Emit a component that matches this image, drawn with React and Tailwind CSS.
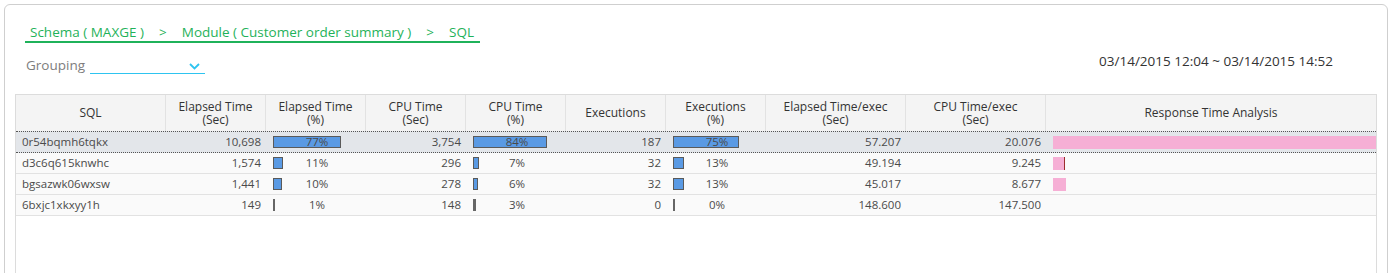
import React from "react";

const rows = [
  { sql: "0r54bqmh6tqkx", el: "10,698", elp: 77, cpu: "3,754", cpup: 84, ex: "187", exp: 75, ele: "57.207", cpue: "20.076", rt: 325, sel: true },
  { sql: "d3c6q615knwhc", el: "1,574", elp: 11, cpu: "296", cpup: 7, ex: "32", exp: 13, ele: "49.194", cpue: "9.245", rt: 12, edge: true },
  { sql: "bgsazwk06wxsw", el: "1,441", elp: 10, cpu: "278", cpup: 6, ex: "32", exp: 13, ele: "45.017", cpue: "8.677", rt: 13 },
  { sql: "6bxjc1xkxyy1h", el: "149", elp: 1, cpu: "148", cpup: 3, ex: "0", exp: 0, ele: "148.600", cpue: "147.500", rt: 0 },
];

function PctCell({ p }) {
  const w = Math.max(2, Math.round((88 * p) / 100));
  return (
    <div className="relative w-[100px] shrink-0 h-full flex items-center">
      <div
        className={p <= 3 ? "ml-[6px] h-[12px] bg-[#666]" : "ml-[6px] h-[12px] bg-[#5a9ae4] border border-[#5a5a5a]"}
        style={{ width: w }}
      />
      <div className="absolute inset-0 flex items-center justify-center">{p}%</div>
    </div>
  );
}

function Head({ w, children, last }) {
  return (
    <div
      className={
        "shrink-0 h-full flex items-center justify-center text-center leading-[13.5px] " +
        (last ? "flex-1" : "border-r border-[#e2e2e2] " + w)
      }
    >
      {children}
    </div>
  );
}

export default function App() {
  return (
    <div className="bg-white w-[1391px] h-[273px] overflow-hidden pt-[4px] pl-[4px]" style={{ fontFamily: '"Open Sans", "Noto Sans", sans-serif' }}>
      <div className="w-[1384px] h-[320px] border border-[#cfcfcf] rounded-[6px] bg-white pt-[14px] px-[10px]">
        <div className="ml-[10px] inline-flex items-center border-b-2 border-[#1fb25a] pl-[5px] pr-[6px] text-[13.5px] leading-[18px] text-[#1fb25a]">
          <span>Schema ( MAXGE )</span>
          <span className="mx-[15px]">&gt;</span>
          <span>Module ( Customer order summary )</span>
          <span className="mx-[15px]">&gt;</span>
          <span>SQL</span>
        </div>
        <div className="mt-[9px] h-[24px] flex items-start justify-between">
          <div className="ml-[11px] mt-[4px] flex items-start">
            <span className="text-[13.5px] leading-[18px] text-[#7d7d7d]">Grouping</span>
            <div className="ml-[5px] w-[115px] h-[18px] border-b border-[#2ec4f0] flex items-center justify-end pr-[5px]">
              <svg width="11" height="7" viewBox="0 0 11 7" className="mt-[4px]">
                <polyline points="1,1 5.5,5.5 10,1" fill="none" stroke="#2ec4f0" strokeWidth="1.8" />
              </svg>
            </div>
          </div>
          <div className="mr-[44px] text-[13.5px] leading-[18px] text-[#333]">03/14/2015 12:04 ~ 03/14/2015 14:52</div>
        </div>
        <div className="mt-[18px] h-[240px] border border-b-0 border-[#dcdcdc] text-[12px] text-[#333]">
          <div className="h-[36px] flex bg-[#f4f4f4]">
            <Head w="w-[150px]">SQL</Head>
            <Head w="w-[100px]">Elapsed Time<br />(Sec)</Head>
            <Head w="w-[100px]">Elapsed Time<br />(%)</Head>
            <Head w="w-[100px]">CPU Time<br />(Sec)</Head>
            <Head w="w-[100px]">CPU Time<br />(%)</Head>
            <Head w="w-[100px]">Executions</Head>
            <Head w="w-[100px]">Executions<br />(%)</Head>
            <Head w="w-[140px]">Elapsed Time/exec<br />(Sec)</Head>
            <Head w="w-[140px]">CPU Time/exec<br />(Sec)</Head>
            <Head last>Response Time Analysis</Head>
          </div>
          {rows.map((r) => (
            <div
              key={r.sql}
              className={
                "flex h-[21px] text-[11.5px] text-[#4a4a4a] " +
                (r.sel
                  ? "bg-[#e3e6ea] border-y border-dotted border-[#555] h-[22px]"
                  : "bg-[#fafafa] border-b border-[#e2e2e2]")
              }
            >
              <div className="w-[151px] shrink-0 pl-[6px] flex items-center">{r.sql}</div>
              <div className="w-[100px] shrink-0 pr-[6px] flex items-center justify-end">{r.el}</div>
              <PctCell p={r.elp} />
              <div className="w-[100px] shrink-0 pr-[6px] flex items-center justify-end">{r.cpu}</div>
              <PctCell p={r.cpup} />
              <div className="w-[100px] shrink-0 pr-[6px] flex items-center justify-end">{r.ex}</div>
              <PctCell p={r.exp} />
              <div className="w-[140px] shrink-0 pr-[6px] flex items-center justify-end">{r.ele}</div>
              <div className="w-[140px] shrink-0 pr-[6px] flex items-center justify-end">{r.cpue}</div>
              <div className="flex-1 flex items-center pl-[6px] overflow-hidden">
                {r.rt > 0 && (
                  <div
                    className={"h-[13px] bg-[#f6afd5] shrink-0 " + (r.edge ? "border-r border-[#9b2d2d]" : "")}
                    style={{ width: r.rt }}
                  />
                )}
              </div>
            </div>
          ))}
        </div>
      </div>
    </div>
  );
}
